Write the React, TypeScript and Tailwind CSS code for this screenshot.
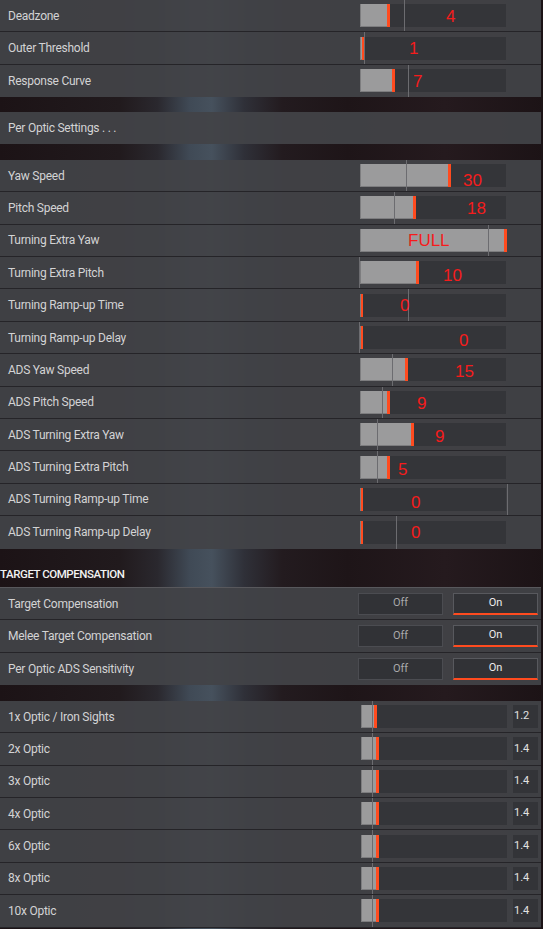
import React from 'react';

/* Slider rows: values are pixel offsets from the left edge of the 146px track. */
type SliderRow = {
  label: string;
  fill: number;
  line: number;
  value: string;
  vx: number;
  dy?: number;
};

const stickRows: SliderRow[] = [
  { label: 'Deadzone', fill: 27, line: 44, value: '4', vx: 86 },
  { label: 'Outer Threshold', fill: 1.5, line: 4, value: '1', vx: 49 },
  { label: 'Response Curve', fill: 32, line: 48, value: '7', vx: 53 },
];

const lookRows: SliderRow[] = [
  { label: 'Yaw Speed', fill: 88, line: 46, value: '30', vx: 103, dy: 4 },
  { label: 'Pitch Speed', fill: 53, line: 34, value: '18', vx: 107 },
  { label: 'Turning Extra Yaw', fill: 144, line: 128, value: 'FULL', vx: 48 },
  { label: 'Turning Extra Pitch', fill: 56, line: -1, value: '10', vx: 83, dy: 2 },
  { label: 'Turning Ramp-up Time', fill: 0.5, line: 48, value: '0', vx: 40 },
  { label: 'Turning Ramp-up Delay', fill: 0.5, line: -1, value: '0', vx: 99, dy: 2 },
  { label: 'ADS Yaw Speed', fill: 45, line: 32, value: '15', vx: 95, dy: 1 },
  { label: 'ADS Pitch Speed', fill: 27, line: 22, value: '9', vx: 57, dy: 1 },
  { label: 'ADS Turning Extra Yaw', fill: 51, line: 17, value: '9', vx: 75, dy: 1 },
  { label: 'ADS Turning Extra Pitch', fill: 27, line: 17, value: '5', vx: 38, dy: 2 },
  { label: 'ADS Turning Ramp-up Time', fill: 0.5, line: 147, value: '0', vx: 51, dy: 3 },
  { label: 'ADS Turning Ramp-up Delay', fill: 0.5, line: 36, value: '0', vx: 51 },
];

const toggleRows = ['Target Compensation', 'Melee Target Compensation', 'Per Optic ADS Sensitivity'];

const opticRows = [
  { label: '1x Optic / Iron Sights', fill: 13, value: '1.2' },
  { label: '2x Optic', fill: 15, value: '1.4' },
  { label: '3x Optic', fill: 15, value: '1.4' },
  { label: '4x Optic', fill: 15, value: '1.4' },
  { label: '6x Optic', fill: 15, value: '1.4' },
  { label: '8x Optic', fill: 15, value: '1.4' },
  { label: '10x Optic', fill: 15, value: '1.4' },
];

const labelFont = "font-['Roboto',sans-serif]";

function Row({ children, last }: { children: React.ReactNode; last?: boolean }) {
  return (
    <div
      className={`flex h-[32.4px] w-[541px] items-center bg-[#424347]/[0.94] ${
        last ? '' : 'border-b border-[#252428]'
      }`}
    >
      {children}
    </div>
  );
}

function Label({ text }: { text: string }) {
  return (
    <span className={`${labelFont} flex-1 pl-2 text-[12px] tracking-[-0.25px] text-[#d3d3d4]`}>
      {text}
    </span>
  );
}

function Slider({ row }: { row: SliderRow }) {
  return (
    <div className="relative flex h-full w-[146px] items-center">
      <div className="relative h-[23px] w-full bg-[#343539]">
        <div
          className="absolute inset-y-0 left-0 border-l border-b border-[#7d7d7f] bg-[#9b9b9c]"
          style={{ width: row.fill }}
        />
        <div className="absolute inset-y-0 w-[2.5px] bg-[#ff4b1f]" style={{ left: row.fill }} />
      </div>
      <div className="absolute inset-y-0 w-px bg-[#6c6c70]" style={{ left: row.line }} />
      <span
        className="absolute top-1/2 -translate-y-1/2 font-['Liberation_Sans',sans-serif] text-[17px] leading-none text-[#f51c1c]"
        style={{ left: row.vx, marginTop: row.dy ?? 0 }}
      >
        {row.value}
      </span>
    </div>
  );
}

function SliderRows({ rows }: { rows: SliderRow[] }) {
  return (
    <>
      {rows.map((r, i) => (
        <Row key={r.label} last={i === rows.length - 1}>
          <Label text={r.label} />
          <div className="h-full pr-[35px]">
            <Slider row={r} />
          </div>
        </Row>
      ))}
    </>
  );
}

function Toggle({ text, active }: { text: string; active?: boolean }) {
  return (
    <div
      className={`${labelFont} flex h-[22px] w-[85px] items-center justify-center border bg-[#313236] text-[11px] ${
        active
          ? 'border-[#58595e] border-b-2 border-b-[#ff4b1f] text-[#ececec]'
          : 'border-[#4b4c51] text-[#a9a9ab]'
      }`}
    >
      {text}
    </div>
  );
}

export default function App() {
  return (
    <div className="h-[929px] w-[543px] overflow-hidden bg-[linear-gradient(90deg,#1c1316_0%,#211a1d_22%,#2a282e_29%,#404a56_35%,#46515d_39%,#2f3038_45%,#231b1f_52%,#1e1518_64%,#251a1e_82%,#1c1316_100%)]">
      {/* Stick response */}
      <SliderRows rows={stickRows} />
      <div className="h-[15px]" />

      <div className="flex h-[31.4px] w-[541px] items-center bg-[#424347]/[0.94]">
        <Label text="Per Optic Settings . . ." />
      </div>
      <div className="h-[16.3px]" />

      {/* Look speeds */}
      <SliderRows rows={lookRows} />

      <div className="flex h-[39.3px] w-[541px] items-end border-b border-[#58585c] pb-[6px]">
        <span className={`${labelFont} text-[11.5px] font-medium leading-[14px] tracking-[-0.45px] text-[#f2f2f2]`}>
          TARGET COMPENSATION
        </span>
      </div>

      {toggleRows.map((t, i) => (
        <Row key={t} last={i === toggleRows.length - 1}>
          <Label text={t} />
          <div className="flex gap-[10px] pr-[3px]">
            <Toggle text="Off" />
            <Toggle text="On" active />
          </div>
        </Row>
      ))}
      <div className="h-[15.8px]" />

      {/* Per optic ADS */}
      {opticRows.map((o) => (
        <Row key={o.label}>
          <Label text={o.label} />
          <div className="relative flex h-full items-center gap-[6px] pr-[3px]">
            <div className="relative h-[23px] w-[146px] bg-[#343539]">
              <div
                className="absolute inset-y-0 left-0 border-l border-b border-[#7d7d7f] bg-[#9b9b9c]"
                style={{ width: o.fill }}
              />
              <div className="absolute inset-y-0 w-[2.5px] bg-[#ff4b1f]" style={{ left: o.fill }} />
            </div>
            <div className="absolute inset-y-0 left-[11px] w-px bg-[#6c6c70]" />
            <div className={`${labelFont} flex h-[23px] w-[25px] items-center bg-[#333438] pl-px text-[11px] text-[#e2e2e2]`}>
              {o.value}
            </div>
          </div>
        </Row>
      ))}
    </div>
  );
}
